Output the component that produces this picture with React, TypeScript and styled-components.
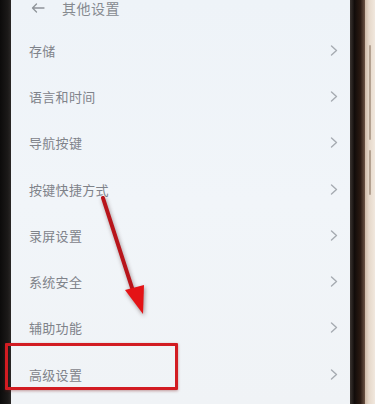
import styled, { createGlobalStyle } from 'styled-components';

const GlobalStyle = createGlobalStyle`
  html, body {
    margin: 0;
    padding: 0;
    background: #d9cbbd;
    overflow: hidden;
  }
  * {
    box-sizing: border-box;
  }
`;

const Phone = styled.div`
  position: relative;
  display: flex;
  width: 375px;
  height: 404px;
  overflow: hidden;
  font-family: 'Noto Sans CJK SC', 'Noto Sans', sans-serif;
`;

const LeftBezel = styled.div`
  width: 11px;
  flex-shrink: 0;
  background: linear-gradient(90deg, #0c0b0b 0%, #1b1918 70%, #2a2726 100%);
`;

const RightBezel = styled.div`
  width: 15px;
  flex-shrink: 0;
  background: linear-gradient(90deg, #3a3431 0%, #120c0a 30%, #2b1a12 70%, #6b5243 100%);
`;

const FrameEdge = styled.div`
  width: 10px;
  flex-shrink: 0;
  display: flex;
  flex-direction: column;
  padding: 45px 0 0 4px;
  gap: 10px;
  background: linear-gradient(90deg, #cdb8a6 0%, #e6d8ca 40%, #f1e8de 100%);
`;

const SideButton = styled.div<{ $h: number }>`
  width: 2px;
  height: ${p => p.$h}px;
  background: #b3a190;
  border-radius: 1px;
`;

const Screen = styled.div`
  flex: 1;
  display: flex;
  flex-direction: column;
  background: linear-gradient(180deg, #eef3f8 0%, #f1f5f9 50%, #f0f3f6 100%);
`;

const Header = styled.div`
  height: 27px;
  display: flex;
  align-items: flex-start;
  padding-left: 20px;
`;

const HeaderLine = styled.div`
  height: 16px;
  display: flex;
  align-items: center;
  gap: 17px;
`;

const Title = styled.span`
  font-size: 14px;
  line-height: 16px;
  color: #868a90;
  letter-spacing: 0.5px;
`;

const Row = styled.div`
  height: 46.3px;
  display: flex;
  align-items: center;
  justify-content: space-between;
  padding: 0 12px 0 18px;
`;

const Label = styled.span`
  font-size: 13px;
  color: #7f838a;
  letter-spacing: 0.3px;
`;

const Chevron = styled.svg`
  width: 8px;
  height: 11px;
`;

const Arrow = styled.svg`
  position: absolute;
  left: 96px;
  top: 192px;
  width: 56px;
  height: 130px;
  filter: drop-shadow(1px 2px 2px rgba(60, 20, 20, 0.45));
`;

const Highlight = styled.div`
  position: absolute;
  left: 5px;
  top: 343px;
  width: 173px;
  height: 47px;
  border: 3px solid #d21c22;
  border-radius: 1px;
  box-shadow: 0 1px 3px rgba(120, 20, 20, 0.4);
`;

const items = [
  '存储',
  '语言和时间',
  '导航按键',
  '按键快捷方式',
  '录屏设置',
  '系统安全',
  '辅助功能',
  '高级设置',
];

function ChevronIcon() {
  return (
    <Chevron viewBox="0 0 8 11">
      <path d="M1.5 1 L6.5 5.5 L1.5 10" fill="none" stroke="#a6abb1" strokeWidth="1.4" strokeLinecap="round" strokeLinejoin="round" />
    </Chevron>
  );
}

export default function App() {
  return (
    <>
      <GlobalStyle />
      <Phone>
        <LeftBezel />
        <Screen>
          <Header>
            <HeaderLine>
              <svg width="14" height="10" viewBox="0 0 14 10">
                <path d="M13 5 H1.5 M5.5 1 L1.5 5 L5.5 9" fill="none" stroke="#8e9399" strokeWidth="1.3" strokeLinecap="round" strokeLinejoin="round" />
              </svg>
              <Title>其他设置</Title>
            </HeaderLine>
          </Header>
          {items.map(item => (
            <Row key={item}>
              <Label>{item}</Label>
              <ChevronIcon />
            </Row>
          ))}
        </Screen>
        <RightBezel />
        <FrameEdge>
          <SideButton $h={95} />
          <SideButton $h={45} />
        </FrameEdge>
        <Arrow viewBox="0 0 56 130">
          <path d="M7 6 L38 102" stroke="#b8141a" strokeWidth="4" strokeLinecap="round" />
          <path d="M29 98 L47 122 L48 93 Z" fill="#e41316" />
        </Arrow>
        <Highlight />
      </Phone>
    </>
  );
}
